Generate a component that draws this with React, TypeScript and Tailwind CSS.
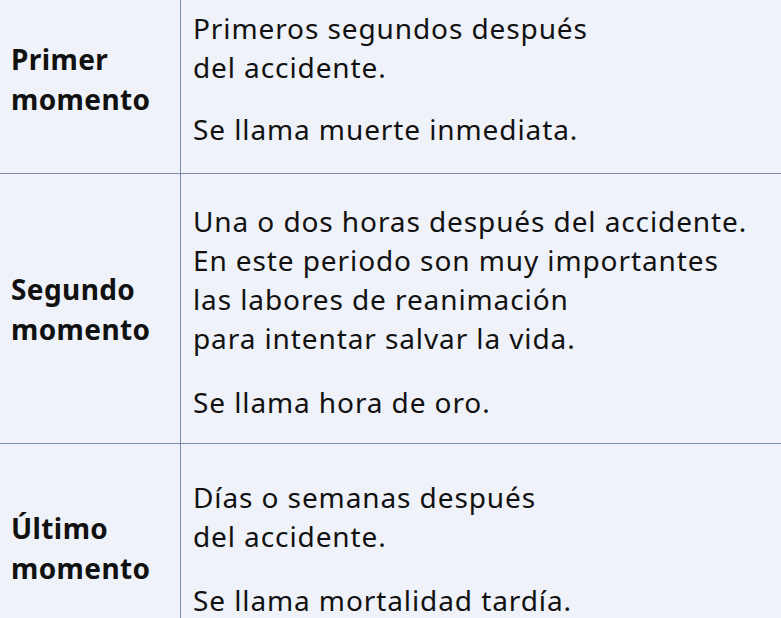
import React from 'react';

interface Row {
  label: string[];
  lines: string[];
  note: string;
  pad: string;
}

const rows: Row[] = [
  {
    label: ['Primer', 'momento'],
    lines: ['Primeros segundos después', 'del accidente.'],
    note: 'Se llama muerte inmediata.',
    pad: 'pt-[25px] pb-[24px]',
  },
  {
    label: ['Segundo', 'momento'],
    lines: [
      'Una o dos horas después del accidente.',
      'En este periodo son muy importantes',
      'las labores de reanimación',
      'para intentar salvar la vida.',
    ],
    note: 'Se llama hora de oro.',
    pad: 'pt-[28px] pb-[21px]',
  },
  {
    label: ['Último', 'momento'],
    lines: ['Días o semanas después', 'del accidente.'],
    note: 'Se llama mortalidad tardía.',
    pad: 'pt-[34px] pb-[32px]',
  },
];

export default function App() {
  return (
    <div
      className="w-[781px] h-[618px] overflow-hidden bg-[#eff2f8] text-[#111111]"
      style={{ fontFamily: '"Noto Sans", sans-serif' }}
    >
      <div className="-mt-[16px]">
        {rows.map((row, i) => (
          <div
            key={i}
            className={`grid grid-cols-[181px_1fr] ${i < rows.length - 1 ? 'border-b border-[#7a8cae]' : ''}`}
          >
            <div className="flex flex-col justify-center pl-[11px] border-r border-[#7a8cae] text-[28px] font-bold leading-[40px] tracking-[0.4px]">
              {row.label.map((l) => (
                <span key={l}>{l}</span>
              ))}
            </div>
            <div className={`pl-[12px] text-[28px] leading-[39px] tracking-[0.9px] ${row.pad}`}>
              <p>
                {row.lines.map((l) => (
                  <span key={l} className="block">
                    {l}
                  </span>
                ))}
              </p>
              <p className={i === 0 ? 'mt-[23px]' : 'mt-[25px]'}>{row.note}</p>
            </div>
          </div>
        ))}
      </div>
    </div>
  );
}
